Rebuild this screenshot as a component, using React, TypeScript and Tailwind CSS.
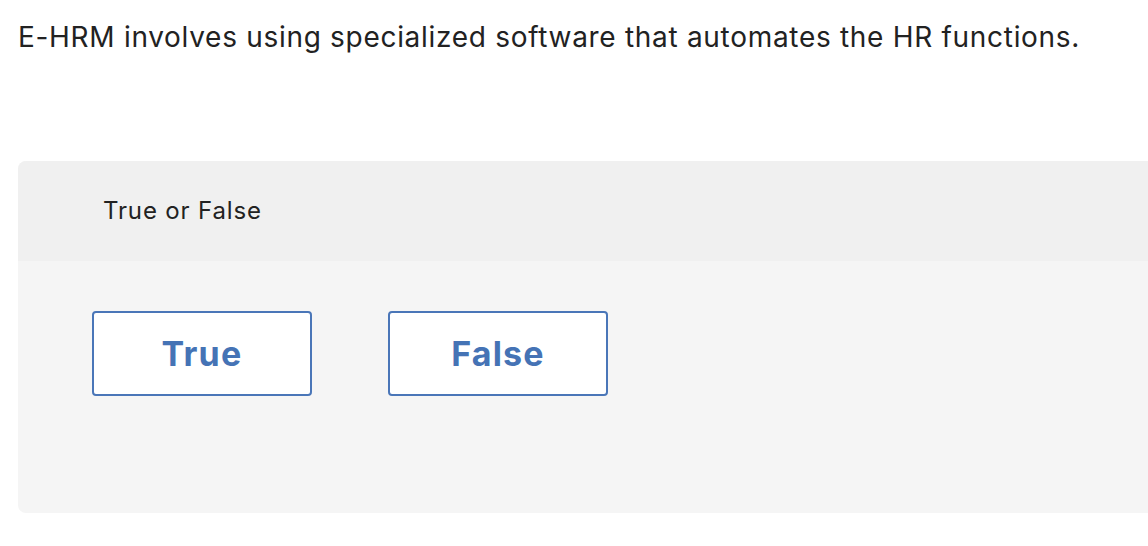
export default function App() {
  return (
    <div className="min-h-[546px] bg-white font-['Inter','Noto_Sans',sans-serif] text-[#222]">
      <div className="pl-[18px] pt-[18px]">
        <p className="text-[28px] leading-[38px] tracking-[0.7px] whitespace-nowrap">
          E-HRM involves using specialized software that automates the HR functions.
        </p>
      </div>
      <div className="ml-[18px] mt-[105px] h-[352px] rounded-l-lg overflow-hidden bg-[#f5f5f5]">
        <div className="h-[100px] bg-[#f0f0f0] flex items-center pl-[85px]">
          <span className="text-[24px] tracking-[0.85px]">True or False</span>
        </div>
        <div className="flex gap-[76px] pl-[74px] pt-[50px]">
          <button className="w-[220px] h-[85px] rounded-[4px] border-2 border-[#4a76b8] bg-white text-[#4573b5] text-[34px] font-bold tracking-[1.2px]">
            True
          </button>
          <button className="w-[220px] h-[85px] rounded-[4px] border-2 border-[#4a76b8] bg-white text-[#4573b5] text-[34px] font-bold tracking-[1.2px]">
            False
          </button>
        </div>
      </div>
    </div>
  );
}
